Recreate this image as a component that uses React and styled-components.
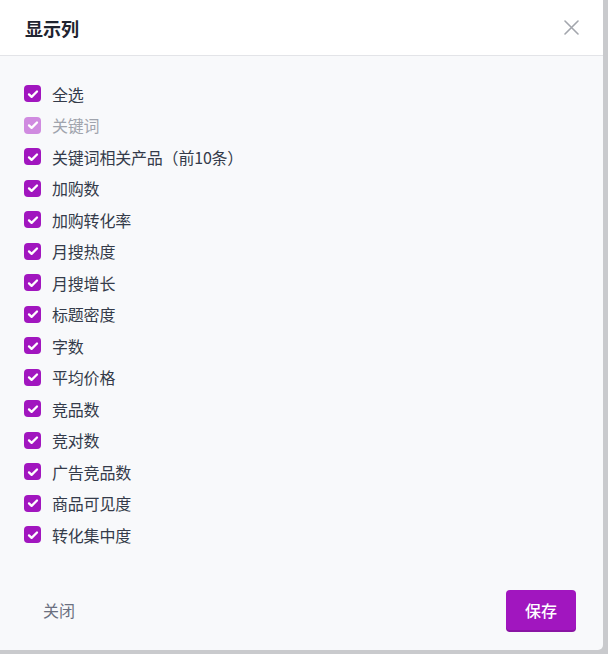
import React from 'react'
import styled, { createGlobalStyle } from 'styled-components'

const GlobalStyle = createGlobalStyle`
html, body {
  margin: 0;
  padding: 0;
  background: #c9cacd;
  font-family: "Noto Sans CJK SC", "Noto Sans", sans-serif;
}
`

const Page = styled.div`
width: 608px;
height: 654px;
`

const Modal = styled.div`
width: 603px;
height: 650px;
background-color: #f8f9fb;
border-bottom-right-radius: 5px;
display: flex;
flex-direction: column;
overflow: hidden;
`

const Header = styled.div`
height: 56px;
box-sizing: border-box;
border-bottom: 1px solid #e3e4e8;
background-color: #fff;
display: flex;
align-items: center;
justify-content: space-between;
padding: 0 24px 0 25px;
`

const Title = styled.h2`
margin: 0;
font-size: 18px;
font-weight: 700;
color: #1f2430;
line-height: 24px;
`

const CloseButton = styled.button`
border: none;
background: transparent;
padding: 0;
width: 16px;
height: 16px;
display: flex;
align-items: center;
justify-content: center;
cursor: pointer;
`

const Body = styled.div`
padding: 22px 24px 19px 24px;
display: flex;
flex-direction: column;
`

const Row = styled.label`
height: 31.5px;
display: flex;
align-items: center;
gap: 11px;
font-size: 16px;
letter-spacing: -0.2px;
color: ${({ disabled }) => (disabled ? '#a0a4ad' : '#343b4a')};
`

const Box = styled.span`
width: 17px;
height: 17px;
border-radius: 4px;
background-color: ${({ disabled }) => (disabled ? '#d08be0' : '#a116bf')};
display: flex;
align-items: center;
justify-content: center;
flex-shrink: 0;
`

const Footer = styled.div`
flex: 1;
display: flex;
align-items: center;
justify-content: space-between;
padding: 0 27px 0 25px;
`

const GhostButton = styled.button`
border: none;
background: transparent;
font-family: inherit;
font-size: 16px;
color: #6b7080;
padding: 0 18px;
height: 40px;
cursor: pointer;
`

const SaveButton = styled.button`
border: none;
background-color: #a116bf;
color: #fff;
font-family: inherit;
font-size: 16px;
font-weight: 500;
width: 70px;
height: 40px;
border-radius: 4px;
box-shadow: 0 2px 0 #8a14a4;
cursor: pointer;
`

const columns = [
  { label: '全选' },
  { label: '关键词', disabled: true },
  { label: '关键词相关产品（前10条）' },
  { label: '加购数' },
  { label: '加购转化率' },
  { label: '月搜热度' },
  { label: '月搜增长' },
  { label: '标题密度' },
  { label: '字数' },
  { label: '平均价格' },
  { label: '竞品数' },
  { label: '竞对数' },
  { label: '广告竞品数' },
  { label: '商品可见度' },
  { label: '转化集中度' },
]

const Check = () => (
  <svg width="12" height="12" viewBox="0 0 12 12" fill="none">
    <path d="M2 6.4l2.6 2.5L10 3.5" stroke="#fff" strokeWidth="2.3" strokeLinecap="round" strokeLinejoin="round" />
  </svg>
)

const App = () => {
  return (
    <Page>
      <GlobalStyle />
      <Modal>
        <Header>
          <Title>显示列</Title>
          <CloseButton aria-label="关闭">
            <svg width="15" height="15" viewBox="0 0 15 15">
              <path d="M1 1l13 13M14 1L1 14" stroke="#a3a6ad" strokeWidth="1.6" strokeLinecap="round" />
            </svg>
          </CloseButton>
        </Header>
        <Body>
          {columns.map((c) => (
            <Row key={c.label} disabled={c.disabled}>
              <Box disabled={c.disabled}><Check /></Box>
              {c.label}
            </Row>
          ))}
        </Body>
        <Footer>
          <GhostButton>关闭</GhostButton>
          <SaveButton>保存</SaveButton>
        </Footer>
      </Modal>
    </Page>
  )
}

export default App
